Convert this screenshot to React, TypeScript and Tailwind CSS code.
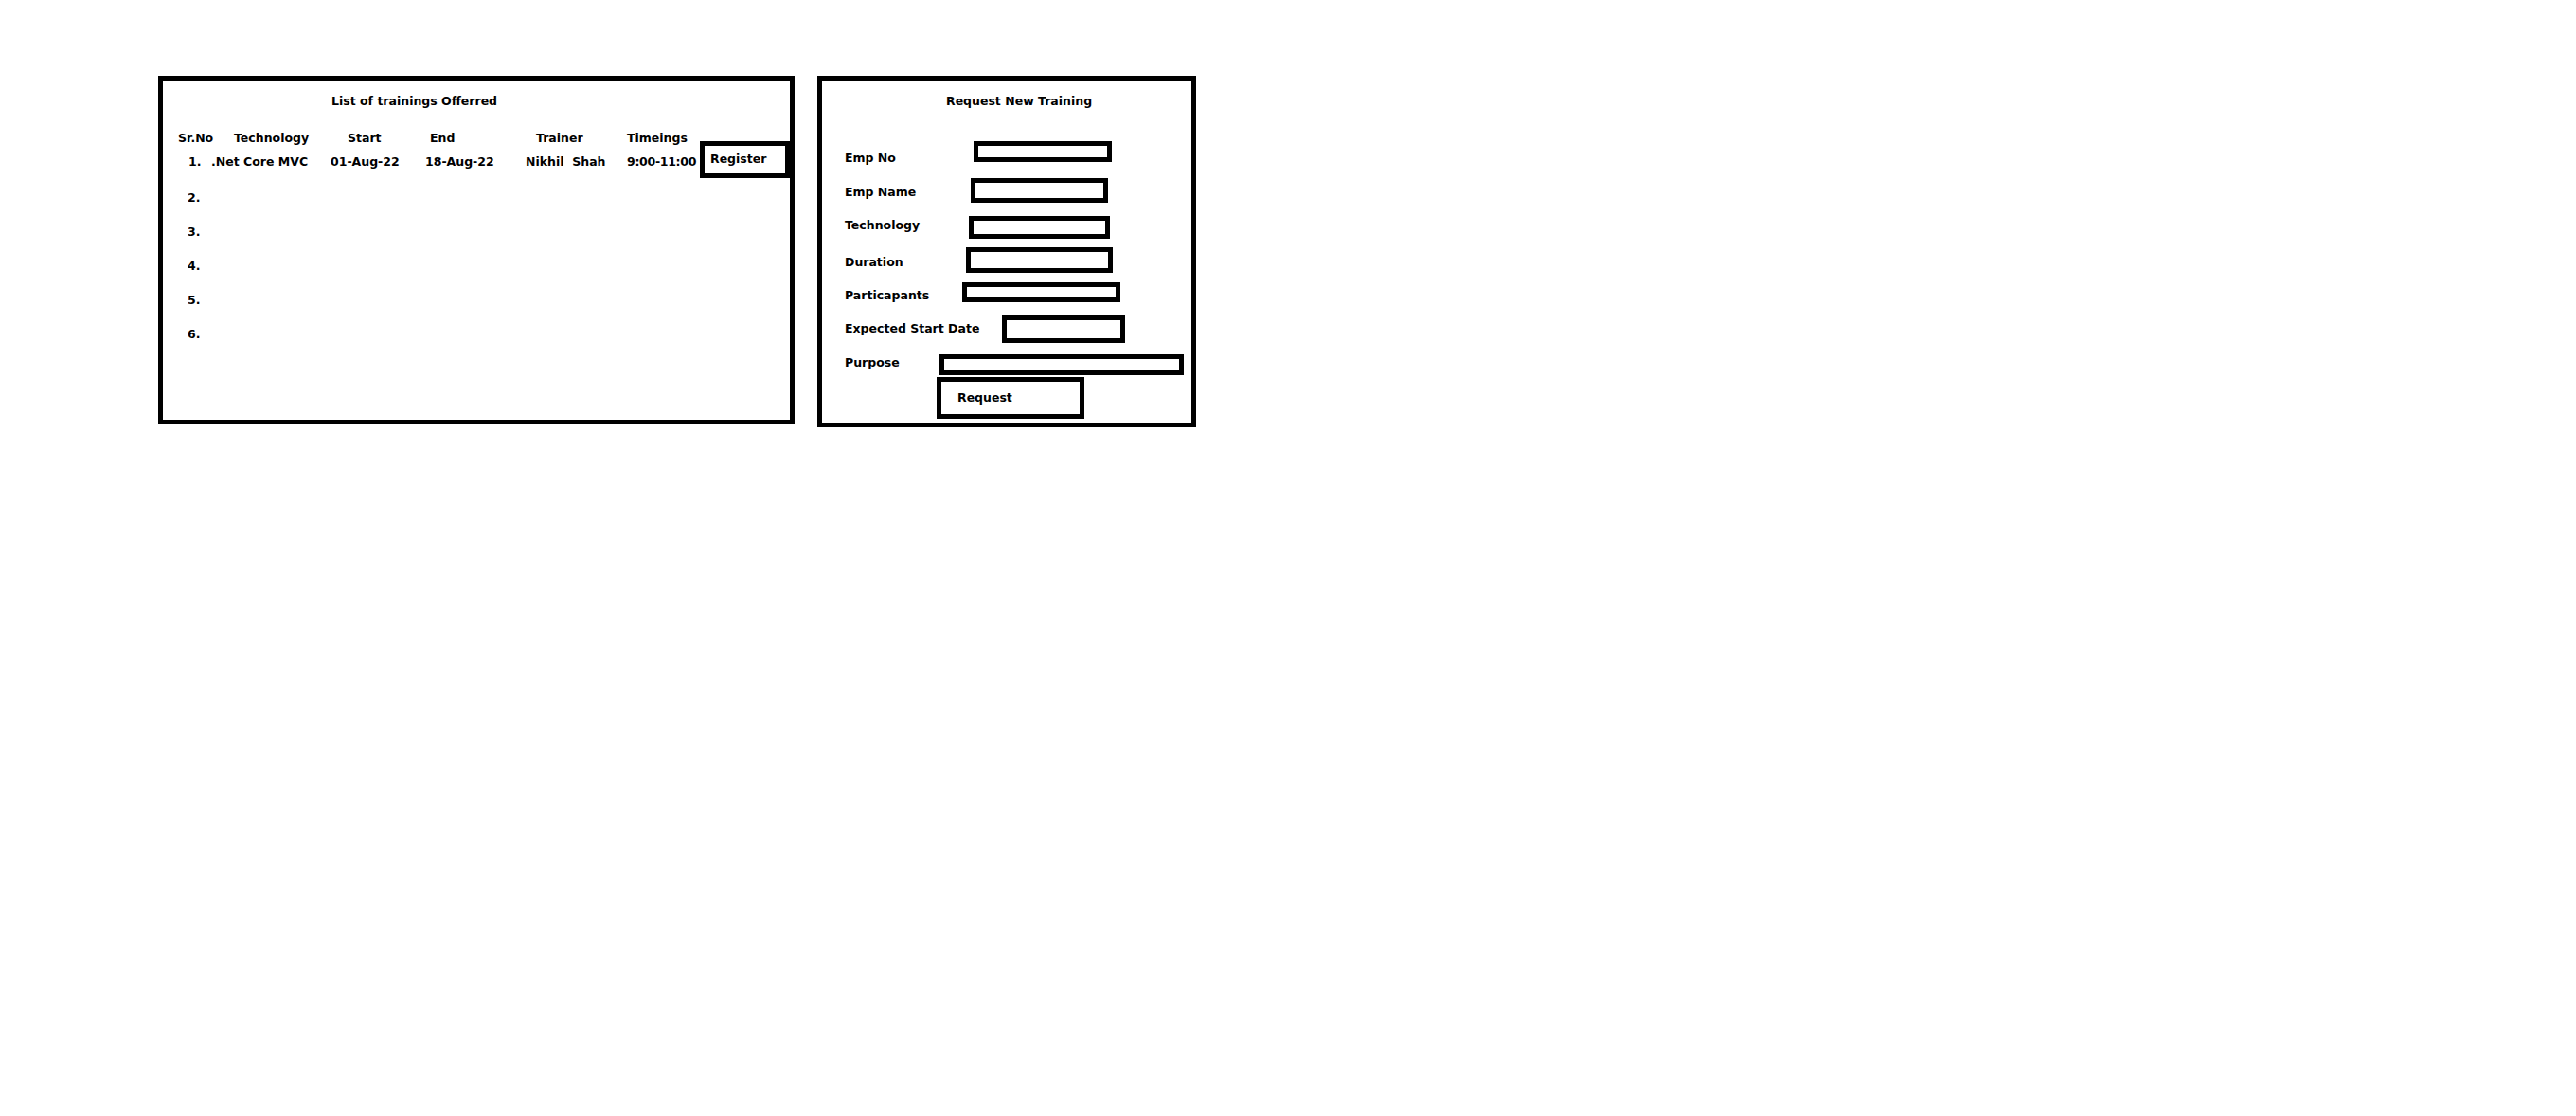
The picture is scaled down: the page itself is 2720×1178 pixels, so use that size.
const FIELDS = [
  { label: "Emp No", row: "h-[39px]", lw: "w-[136px]", lt: "mt-[10px]", box: "w-[146px] h-[22px]" },
  { label: "Emp Name", row: "h-[40px]", lw: "w-[133px]", lt: "mt-[7px]", box: "w-[145px] h-[26px]" },
  { label: "Technology", row: "h-[33px]", lw: "w-[131px]", lt: "mt-[2px]", box: "w-[149px] h-[24px]" },
  { label: "Duration", row: "h-[37px]", lw: "w-[128px]", lt: "mt-[8px]", box: "w-[155px] h-[27px]" },
  { label: "Particapants", row: "h-[35px]", lw: "w-[124px]", lt: "mt-[6px]", box: "w-[167px] h-[21px]" },
  { label: "Expected Start Date", row: "h-[41px]", lw: "w-[166px]", lt: "mt-[6px]", box: "w-[130px] h-[29px]" },
  { label: "Purpose", row: "h-[24px]", lw: "w-[100px]", lt: "mt-[1px]", box: "w-[258px] h-[22px]" },
];

function TrainingList() {
  return (
    <div className="w-[672px] h-[368px] shrink-0 border-[5px] border-black pt-[14px]">
      <div className="pl-[178px] leading-[15px]">List of trainings Offerred</div>

      <div className="flex mt-[24px] pl-[16px] leading-[15px]">
        <span className="w-[59px] shrink-0">Sr.No</span>
        <span className="w-[120px] shrink-0">Technology</span>
        <span className="w-[87px] shrink-0">Start</span>
        <span className="w-[112px] shrink-0">End</span>
        <span className="w-[96px] shrink-0">Trainer</span>
        <span>Timeings</span>
      </div>

      <div className="flex items-start mt-[-4px] pl-[27px] leading-[15px]">
        <span className="w-[24px] shrink-0 mt-[14px]">1.</span>
        <span className="w-[126px] shrink-0 mt-[14px]">.Net Core MVC</span>
        <span className="w-[100px] shrink-0 mt-[14px]">01-Aug-22</span>
        <span className="w-[106px] shrink-0 mt-[14px]">18-Aug-22</span>
        <span className="w-[107px] shrink-0 mt-[14px] whitespace-pre">Nikhil  Shah</span>
        <span className="w-[77px] shrink-0 mt-[14px] tracking-[-0.3px] whitespace-nowrap">9:00-11:00</span>
        <div className="w-[95px] h-[39px] shrink-0 border-[5px] border-black pl-[6px] pt-[6px]">Register</div>
      </div>

      <div className="flex flex-col gap-[21px] mt-[13px] pl-[26px] leading-[15px]">
        {["2.", "3.", "4.", "5.", "6."].map((n) => (
          <span key={n}>{n}</span>
        ))}
      </div>
    </div>
  );
}

function RequestForm() {
  return (
    <div className="w-[400px] h-[371px] shrink-0 border-[5px] border-black pt-[14px]">
      <div className="pl-[131px] leading-[15px]">Request New Training</div>

      <div className="mt-[35px] pl-[24px] flex flex-col">
        {FIELDS.map((f) => (
          <div key={f.label} className={`flex items-start ${f.row}`}>
            <span className={`${f.lw} ${f.lt} shrink-0 leading-[15px]`}>{f.label}</span>
            <div className={`${f.box} shrink-0 border-[5px] border-black`} />
          </div>
        ))}
      </div>

      <div className="ml-[121px] w-[156px] h-[44px] border-[5px] border-black pl-[17px] pt-[9px] leading-[15px]">
        Request
      </div>
    </div>
  );
}

export default function App() {
  return (
    <div className="min-h-screen bg-white text-black font-['DejaVu_Sans',sans-serif] font-bold text-[12.5px] pl-[167px] pt-[80px] flex items-start gap-[24px]">
      <TrainingList />
      <RequestForm />
    </div>
  );
}
